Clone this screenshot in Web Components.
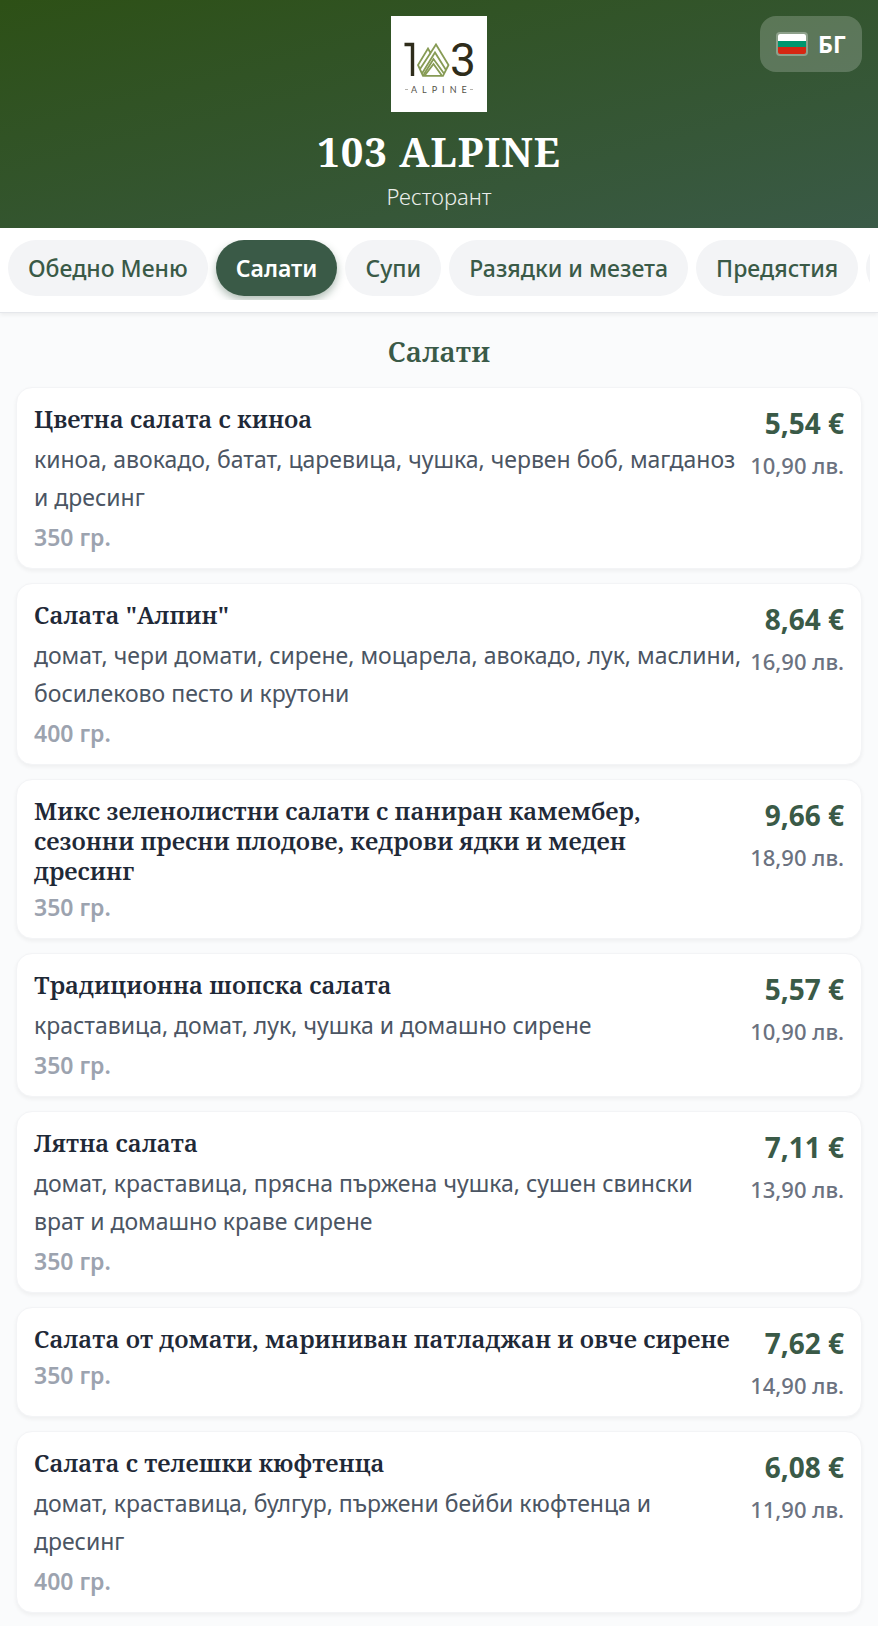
<!DOCTYPE html>
<html lang="bg">
<head>
<meta charset="UTF-8">
<meta name="viewport" content="width=device-width, initial-scale=1.0">
<title>103 ALPINE</title>
<style>
    :root {
        --forest: #2d5016;
        --pine: #3a5a47;
        --ink: #1f2937;
        --text: #4b5563;
        --muted: #6b7280;
        --faint: #9ca3af;
        --chip: #f3f4f6;
        --page: #fafbfc;
        --serif: "Noto Serif", "Liberation Serif", serif;
        --sans: "Noto Sans", "Open Sans", sans-serif;
    }

    body {
        margin: 0;
        background: var(--page);
        font-family: var(--sans);
        color: var(--text);
    }
</style>
</head>
<body>
<menu-header>
    <h1 slot="title">103 ALPINE</h1>
    <p slot="subtitle">Ресторант</p>
    <lang-button slot="lang">БГ</lang-button>
</menu-header>

<category-nav>
    <category-tab>Обедно Меню</category-tab>
    <category-tab active>Салати</category-tab>
    <category-tab>Супи</category-tab>
    <category-tab>Разядки и мезета</category-tab>
    <category-tab>Предястия</category-tab>
    <category-tab label="Още"></category-tab>
</category-nav>

<menu-section>
    <h2 slot="heading">Салати</h2>
    <menu-item weight="350 гр." eur="5,54 €" bgn="10,90 лв.">
        <h3 slot="name">Цветна салата с киноа</h3>
        <p slot="desc">киноа, авокадо, батат, царевица, чушка, червен боб, магданоз и дресинг</p>
    </menu-item>
    <menu-item weight="400 гр." eur="8,64 €" bgn="16,90 лв.">
        <h3 slot="name">Салата "Алпин"</h3>
        <p slot="desc">домат, чери домати, сирене, моцарела, авокадо, лук, маслини, босилеково песто и крутони</p>
    </menu-item>
    <menu-item weight="350 гр." eur="9,66 €" bgn="18,90 лв.">
        <h3 slot="name">Микс зеленолистни салати с паниран камембер, сезонни пресни плодове, кедрови ядки и меден<br> дресинг</h3>
    </menu-item>
    <menu-item weight="350 гр." eur="5,57 €" bgn="10,90 лв.">
        <h3 slot="name">Традиционна шопска салата</h3>
        <p slot="desc">краставица, домат, лук, чушка и домашно сирене</p>
    </menu-item>
    <menu-item weight="350 гр." eur="7,11 €" bgn="13,90 лв.">
        <h3 slot="name">Лятна салата</h3>
        <p slot="desc">домат, краставица, прясна пържена чушка, сушен свински врат и домашно краве сирене</p>
    </menu-item>
    <menu-item weight="350 гр." eur="7,62 €" bgn="14,90 лв.">
        <h3 slot="name">Салата от домати, мариниван патладжан и овче сирене</h3>
    </menu-item>
    <menu-item weight="400 гр." eur="6,08 €" bgn="11,90 лв.">
        <h3 slot="name">Салата с телешки кюфтенца</h3>
        <p slot="desc">домат, краставица, булгур, пържени бейби кюфтенца и дресинг</p>
    </menu-item>
</menu-section>

<script>
class AlpineLogo extends HTMLElement {
    constructor() {
        super();
        this.attachShadow({ mode: 'open' });
    }

    connectedCallback() {
        this.shadowRoot.innerHTML = `
            <style>
                :host {
                    display: block;
                    width: 96px;
                    height: 96px;
                    background: #ffffff;
                }
                svg { display: block; }
                .digit { font: 400 46px Roboto, sans-serif; fill: #2f2d1b; }
                .word { font: 400 9px Lato, sans-serif; letter-spacing: 5px; fill: #55524a; }
            </style>
            <svg viewBox="0 0 96 96" role="img" aria-label="103 Alpine">
                <path d="M13.5 28.5 H21.5 V60" fill="none" stroke="#2f2d1b" stroke-width="3.4"/>
                <text class="digit" x="59" y="60">3</text>
                <g fill="none" stroke="#879b55" stroke-width="1.8">
                    <path d="M32 59.8 L27 49 L37 32.5 L39.5 37 L45 28.5 L57.5 49 L52 59.8 Z"/>
                    <path d="M29 53 L39.5 37 M31 57.5 L44 36.5 L55 54"/>
                    <path d="M32.5 59 L42.5 43 L53 57.5"/>
                    <path d="M33.5 59.8 L42.5 48 L51 59.8"/>
                </g>
                <path d="M14 73.5 H17 M79 73.5 H82" stroke="#b5b3ae"/>
                <text class="word" x="20" y="77">ALPINE</text>
            </svg>
        `;
    }
}

class LangButton extends HTMLElement {
    constructor() {
        super();
        this.attachShadow({ mode: 'open' });
    }

    connectedCallback() {
        this.shadowRoot.innerHTML = `
            <style>
                :host { display: block; }
                button {
                    display: flex;
                    align-items: center;
                    gap: 10px;
                    height: 56px;
                    padding: 0 16px;
                    border: 0;
                    border-radius: 16px;
                    background: rgba(255, 255, 255, 0.2);
                    color: #ffffff;
                    font: 700 23px var(--sans);
                    cursor: pointer;
                }
                .flag {
                    box-sizing: border-box;
                    width: 32px;
                    height: 24px;
                    border: 2px solid rgba(255, 255, 255, 0.3);
                    border-radius: 4px;
                    background: linear-gradient(#ffffff 33%, #00966e 33% 66%, #d62612 66%) padding-box;
                }
            </style>
            <button type="button"><span class="flag"></span><slot></slot></button>
        `;
    }
}

class MenuHeader extends HTMLElement {
    constructor() {
        super();
        this.attachShadow({ mode: 'open' });
    }

    connectedCallback() {
        this.shadowRoot.innerHTML = `
            <style>
                :host { display: block; }
                header {
                    position: relative;
                    display: flex;
                    flex-direction: column;
                    align-items: center;
                    padding: 16px 16px 14px;
                    background: linear-gradient(to bottom right, var(--forest), var(--pine));
                    color: #ffffff;
                }
                ::slotted(h1) {
                    margin: 16px 0 2px;
                    font: 700 40px/48px var(--serif);
                    letter-spacing: 1px;
                }
                ::slotted(p) {
                    margin: 0;
                    font: 300 22px/36px var(--sans);
                    opacity: 0.9;
                }
                ::slotted(lang-button) {
                    position: absolute;
                    top: 16px;
                    right: 16px;
                }
            </style>
            <header>
                <alpine-logo></alpine-logo>
                <slot name="title"></slot>
                <slot name="subtitle"></slot>
                <slot name="lang"></slot>
            </header>
        `;
    }
}

class CategoryTab extends HTMLElement {
    constructor() {
        super();
        this.attachShadow({ mode: 'open' });
    }

    connectedCallback() {
        const label = this.getAttribute('label');

        this.shadowRoot.innerHTML = `
            <style>
                :host { display: block; flex: none; }
                button {
                    display: block;
                    height: 56px;
                    min-width: 96px;
                    padding: 0 20px;
                    border: 0;
                    border-radius: 28px;
                    background: var(--chip);
                    color: var(--pine);
                    font: 500 23px var(--sans);
                    white-space: nowrap;
                    cursor: pointer;
                }
                :host([active]) button {
                    background: var(--pine);
                    color: #ffffff;
                    font-weight: 600;
                    box-shadow: 0 4px 8px rgba(58, 90, 71, 0.4);
                }
            </style>
            <button type="button" ${label ? `aria-label="${label}"` : ''}><slot></slot></button>
        `;
    }
}

class CategoryNav extends HTMLElement {
    constructor() {
        super();
        this.attachShadow({ mode: 'open' });
    }

    connectedCallback() {
        this.shadowRoot.innerHTML = `
            <style>
                :host {
                    display: block;
                    padding: 12px 8px;
                    background: #ffffff;
                    border-bottom: 1px solid #e5e7eb;
                    box-shadow: 0 2px 4px rgba(0, 0, 0, 0.06);
                }
                nav {
                    display: flex;
                    gap: 8px;
                    padding-bottom: 4px;
                    overflow-x: auto;
                    scrollbar-width: none;
                }
            </style>
            <nav><slot></slot></nav>
        `;
    }
}

class MenuSection extends HTMLElement {
    constructor() {
        super();
        this.attachShadow({ mode: 'open' });
    }

    connectedCallback() {
        this.shadowRoot.innerHTML = `
            <style>
                :host { display: block; }
                section {
                    display: flex;
                    flex-direction: column;
                    gap: 14px;
                    padding: 18px 16px 12px;
                }
                ::slotted(h2) {
                    margin: 0 0 2px;
                    color: var(--pine);
                    font: 600 28px/40px var(--serif);
                    text-align: center;
                }
            </style>
            <section>
                <slot name="heading"></slot>
                <slot></slot>
            </section>
        `;
    }
}

class MenuItem extends HTMLElement {
    constructor() {
        super();
        this.attachShadow({ mode: 'open' });
    }

    connectedCallback() {
        const weight = this.getAttribute('weight');
        const eur = this.getAttribute('eur');
        const bgn = this.getAttribute('bgn');

        this.shadowRoot.innerHTML = `
            <style>
                :host { display: block; }
                article {
                    display: flex;
                    gap: 8px;
                    padding: 16px 17px;
                    border: 1px solid #f3f4f6;
                    border-radius: 16px;
                    background: #ffffff;
                    box-shadow: 0 2px 4px rgba(0, 0, 0, 0.05);
                }
                .info {
                    display: flex;
                    flex: 1;
                    flex-direction: column;
                    gap: 6px;
                    min-width: 0;
                }
                ::slotted(h3) {
                    margin: 0;
                    color: var(--ink);
                    font: 600 24px/30px var(--serif);
                }
                ::slotted(p) {
                    margin: 0;
                    color: var(--text);
                    font: 400 23px/38px var(--sans);
                }
                .weight {
                    color: var(--faint);
                    font: 600 23px/30px var(--sans);
                }
                .prices {
                    display: flex;
                    flex: none;
                    flex-direction: column;
                    gap: 8px;
                    text-align: right;
                    white-space: nowrap;
                }
                .eur {
                    color: var(--pine);
                    font: 700 28px/38px var(--sans);
                }
                .bgn {
                    color: var(--muted);
                    font: 500 22px/30px var(--sans);
                }
            </style>
            <article>
                <div class="info">
                    <slot name="name"></slot>
                    <slot name="desc"></slot>
                    <span class="weight">${weight}</span>
                </div>
                <div class="prices">
                    <span class="eur">${eur}</span>
                    <span class="bgn">${bgn}</span>
                </div>
            </article>
        `;
    }
}

customElements.define('alpine-logo', AlpineLogo);
customElements.define('lang-button', LangButton);
customElements.define('menu-header', MenuHeader);
customElements.define('category-tab', CategoryTab);
customElements.define('category-nav', CategoryNav);
customElements.define('menu-section', MenuSection);
customElements.define('menu-item', MenuItem);
</script>
</body>
</html>
